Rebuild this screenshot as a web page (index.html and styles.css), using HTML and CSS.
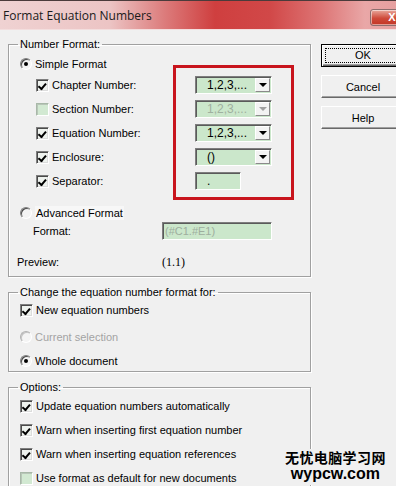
FILE: index.html
```html
<!DOCTYPE html>
<html lang="en">
<head>
    <meta charset="UTF-8">
    <title>Format Equation Numbers</title>
    <link rel="stylesheet" href="styles.css">
</head>
<body>
    <div class="window">
        <div class="titlebar">
            <span class="title">Format Equation Numbers</span>
            <span class="close">X</span>
        </div>

        <div class="dialog">
            <div class="main">
                <!-- Number Format -->
                <fieldset class="group number-format">
                    <legend>Number Format:</legend>
                    <div class="row simple-row"><span class="radio checked"></span>Simple Format</div>

                    <div class="simple-grid">
                        <div class="row opt">
                            <span class="check on"></span><span class="lbl">Chapter Number:</span>
                            <span class="combo"><span class="val">1,2,3,...</span><span class="arrow"></span></span>
                        </div>
                        <div class="row opt">
                            <span class="check off"></span><span class="lbl">Section Number:</span>
                            <span class="combo disabled"><span class="val">1,2,3,...</span><span class="arrow"></span></span>
                        </div>
                        <div class="row opt">
                            <span class="check on"></span><span class="lbl">Equation Number:</span>
                            <span class="combo"><span class="val">1,2,3,...</span><span class="arrow"></span></span>
                        </div>
                        <div class="row opt">
                            <span class="check on"></span><span class="lbl">Enclosure:</span>
                            <span class="combo"><span class="val">()</span><span class="arrow"></span></span>
                        </div>
                        <div class="row opt">
                            <span class="check on"></span><span class="lbl">Separator:</span>
                            <span class="field sep">.</span>
                        </div>
                        <div class="redbox"></div>
                    </div>

                    <div class="row advanced-row"><span class="radio"></span><span class="adv-label">Advanced Format</span></div>
                    <div class="row format-row">
                        <span class="format-label">Format:</span>
                        <span class="field format-field">(#C1.#E1)</span>
                    </div>
                    <div class="row preview-row">
                        <span class="preview-label">Preview:</span>
                        <span class="preview-value">(1.1)</span>
                    </div>
                </fieldset>

                <!-- Change format for -->
                <fieldset class="group change-for">
                    <legend>Change the equation number format for:</legend>
                    <div class="row item-new"><span class="check on"></span>New equation numbers</div>
                    <div class="row item-current disabled-text"><span class="radio disabled"></span>Current selection</div>
                    <div class="row item-whole"><span class="radio checked"></span>Whole document</div>
                </fieldset>

                <!-- Options -->
                <fieldset class="group options">
                    <legend>Options:</legend>
                    <div class="row opt2"><span class="check on"></span>Update equation numbers automatically</div>
                    <div class="row opt2"><span class="check on"></span>Warn when inserting first equation number</div>
                    <div class="row opt2"><span class="check on"></span>Warn when inserting equation references</div>
                    <div class="row opt2"><span class="check off"></span>Use format as default for new documents</div>
                </fieldset>
            </div>

            <div class="side">
                <button class="btn default"><span class="focus">OK</span></button>
                <button class="btn">Cancel</button>
                <button class="btn">Help</button>
            </div>
        </div>

        <div class="watermark">
            <div class="wm-cn">无忧电脑学习网</div>
            <div class="wm-en">wypcw.com</div>
        </div>
    </div>
</body>
</html>
```

FILE: styles.css
```css
* {
    box-sizing: border-box;
}

body {
    margin: 0;
    background-color: #f0f0f0;
    font-family: "Liberation Sans", Arial, sans-serif;
    font-size: 11px;
    color: #000;
}

.window {
    position: relative;
    width: 396px;
    height: 486px;
    overflow: hidden;
    background-color: #f0f0f0;
}

/* title bar */
.titlebar {
    height: 30px;
    display: flex;
    justify-content: space-between;
    align-items: flex-start;
    border-top: 1px solid #4b3b3b;
    background: linear-gradient(to right, #efd2d2 0, #ecc4c4 110px, #dc7b7b 165px, #cf3f3f 215px, #d14848 270px, #dd7474 320px, #e9a7a7 365px, #e6a0a0 396px);
    box-shadow: inset 0 -1px #f3dede;
}

.title {
    font-family: "Open Sans", sans-serif;
    font-size: 12px;
    padding: 6px 0 0 3px;
    color: #1a1a1a;
}

.close {
    margin-top: 8px;
    margin-right: -18px;
    width: 44px;
    height: 17px;
    border: 1px solid #8c6e6e;
    border-radius: 3px;
    background: linear-gradient(#e9a99d, #cf4a3a 55%, #c23626);
    box-shadow: inset 0 0 0 1px rgba(255, 255, 255, 0.5);
    color: #fff;
    font-weight: bold;
    font-size: 11px;
    line-height: 15px;
    text-align: center;
}

/* dialog body */
.dialog {
    display: flex;
    align-items: flex-start;
    padding: 7px 0 0 8px;
}

.main {
    width: 303px;
    flex: none;
}

.group {
    margin: 0;
    padding: 0 11px 0 11px;
    border: 1px solid #a0a0a0;
    box-shadow: 1px 1px 0 #fff, inset 1px 1px 0 #fff;
    min-width: 0;
}

.group legend {
    padding: 0 2px;
    margin-left: -2px;
    line-height: 14px;
}

.row {
    display: flex;
    align-items: center;
}

/* number format group */
.number-format {
    padding-top: 3px;
    padding-bottom: 5px;
}

.simple-row {
    height: 19px;
}

.simple-grid {
    position: relative;
}

.opt {
    height: 24px;
    padding-left: 16px;
}

.lbl {
    width: 143px;
}

.redbox {
    position: absolute;
    left: 153px;
    top: -8px;
    width: 121px;
    height: 135px;
    border: 3px solid #c8151d;
}

.advanced-row {
    height: 18px;
    margin-top: 11px;
}

.adv-label {
    background-color: #f7f7f7;
    padding: 1px 1px;
}

.format-row {
    height: 18px;
    padding-left: 13px;
}

.format-label {
    width: 129px;
}

.preview-row {
    height: 18px;
    margin-top: 13px;
    margin-left: -3px;
}

.preview-label {
    width: 145px;
}

.preview-value {
    font-family: "Liberation Serif", serif;
    font-size: 12px;
}

/* change-for group */
.change-for {
    margin-top: 8px;
    padding-top: 1px;
}

.item-new,
.item-current,
.item-whole {
    height: 20px;
}

.item-current {
    margin-top: 7px;
}

.item-whole {
    margin-top: 4px;
}

.disabled-text {
    color: #a3a3a3;
}

/* options group */
.options {
    margin-top: 8px;
    padding-bottom: 20px;
}

.opt2 {
    height: 24px;
}

/* controls */
.check {
    width: 13px;
    height: 13px;
    flex: none;
    margin-right: 3px;
    border: 1px solid;
    border-color: #7e7e7e #fff #fff #7e7e7e;
    box-shadow: inset 1px 1px 0 #4a4a4a, inset -1px -1px 0 #dcdcdc;
    background-color: #eef2ee;
    position: relative;
}

.check.on::after {
    content: "";
    position: absolute;
    left: 2px;
    top: 1px;
    width: 3px;
    height: 6px;
    border: solid #000;
    border-width: 0 2px 2px 0;
    transform: rotate(40deg) translate(1px, 0);
}

.check.off {
    background-color: #d2e9d2;
    border-color: #a8b8a8 #fff #fff #a8b8a8;
    box-shadow: inset 1px 1px 0 #b8c6b8;
}

.radio {
    width: 12px;
    height: 12px;
    flex: none;
    margin-right: 3px;
    border-radius: 50%;
    border: 1px solid;
    border-color: #7e7e7e #fff #fff #7e7e7e;
    box-shadow: inset 1px 1px 0 #4a4a4a;
    background-color: #f4f4f4;
    position: relative;
}

.radio.checked::after {
    content: "";
    position: absolute;
    left: 3px;
    top: 3px;
    width: 4px;
    height: 4px;
    border-radius: 50%;
    background-color: #000;
}

.radio.disabled {
    border-color: #b0b0b0 #fff #fff #b0b0b0;
    box-shadow: inset 1px 1px 0 #c4c4c4;
}

.combo,
.field {
    height: 18px;
    display: flex;
    align-items: center;
    background-color: #cbe7cb;
    border: 1px solid;
    border-color: #7e7e7e #fff #fff #7e7e7e;
    box-shadow: inset 1px 1px 0 #5a5a5a;
    font-size: 12px;
}

.combo {
    width: 77px;
}

.combo .val {
    flex: 1;
    padding-left: 11px;
}

.arrow {
    width: 15px;
    height: 14px;
    margin-right: 1px;
    background-color: #f3f3f3;
    border: 1px solid;
    border-color: #fff #8a8a8a #8a8a8a #fff;
    display: flex;
    justify-content: center;
    align-items: center;
}

.arrow::after {
    content: "";
    border-left: 4px solid transparent;
    border-right: 4px solid transparent;
    border-top: 4px solid #000;
}

.combo.disabled .val {
    color: #9fb09f;
}

.combo.disabled .arrow::after {
    border-top-color: #a0a0a0;
}

.sep {
    width: 46px;
    padding-left: 11px;
}

.format-field {
    width: 110px;
    padding-left: 2px;
    font-size: 11px;
    color: #9eae9e;
}

/* side buttons */
.side {
    margin-left: 10px;
    margin-top: 7px;
    display: flex;
    flex-direction: column;
    gap: 8px;
}

.btn {
    width: 84px;
    height: 23px;
    padding: 0;
    background-color: #f0f0f0;
    border: 1px solid;
    border-color: #fff #696969 #696969 #fff;
    box-shadow: inset -1px -1px 0 #a0a0a0;
    font-family: "Liberation Sans", Arial, sans-serif;
    font-size: 11px;
    color: #000;
}

.btn.default {
    border: 1px solid #000;
    box-shadow: inset 1px 1px 0 #fff, inset -1px -1px 0 #696969, inset -2px -2px 0 #a0a0a0;
    padding: 3px;
}

.btn .focus {
    display: block;
    height: 15px;
    line-height: 13px;
    border: 1px dotted #000;
}

/* watermark over the screenshot */
.watermark {
    position: absolute;
    left: 283px;
    top: 449px;
    padding: 1px 3px 4px 2px;
    background-color: #f0f0f0;
    font-weight: bold;
    text-align: center;
}

.wm-cn {
    font-family: "Noto Sans CJK SC", sans-serif;
    font-size: 14px;
    line-height: 15px;
    letter-spacing: 0.4px;
}

.wm-en {
    font-family: "Liberation Sans", Arial, sans-serif;
    font-size: 16px;
    line-height: 15px;
    margin-top: 1px;
}
```
